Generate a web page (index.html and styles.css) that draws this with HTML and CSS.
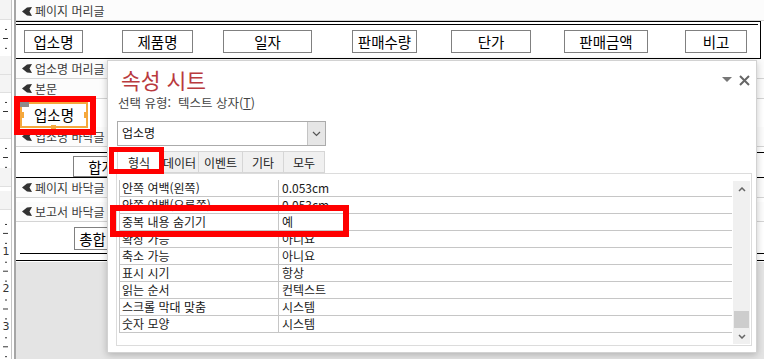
FILE: index.html
```html
<!DOCTYPE html>
<html lang="ko">
<head>
    <meta charset="UTF-8">
    <meta name="viewport" content="width=device-width, initial-scale=1.0">
    <title>보고서 디자인 - 속성 시트</title>
    <link rel="stylesheet" href="styles.css">
</head>
<body>
<div class="screen">
    <!-- vertical ruler -->
    <div class="ruler">
        <div class="r-bar r-top"></div>
        <div class="r-sec r-ph"></div>
        <div class="r-bar"></div>
        <div class="r-bar"></div>
        <div class="r-sec r-detail"></div>
        <div class="r-bar"></div>
        <div class="r-sec r-gf"></div>
        <div class="r-bar"></div>
        <div class="r-sec r-pf"></div>
        <div class="r-bar"></div>
        <div class="r-sec r-rf">
            <span class="r-num">1</span>
            <span class="r-num">2</span>
            <span class="r-num">3</span>
        </div>
    </div>
    <div class="ruler-gap"></div>

    <!-- report sections -->
    <div class="design">
        <div class="bar bar-top">
            <svg class="bar-icon" width="10" height="9" viewBox="0 0 10 9"><path d="M0 4.5 L5 0.5 L10 0 L7.5 4.5 L10 9 L5 8.5 Z" fill="#333"/></svg>
            페이지 머리글
        </div>
        <div class="sec sec-ph">
            <div class="ph-frame">
                <div class="ph-line"></div>
                <div class="labels">
                    <div class="ctl lb-1">업소명</div>
                    <div class="ctl lb-2">제품명</div>
                    <div class="ctl lb-3">일자</div>
                    <div class="ctl lb-4">판매수량</div>
                    <div class="ctl lb-5">단가</div>
                    <div class="ctl lb-6">판매금액</div>
                    <div class="ctl lb-7">비고</div>
                </div>
            </div>
        </div>
        <div class="bar">
            <svg class="bar-icon" width="10" height="9" viewBox="0 0 10 9"><path d="M0 4.5 L5 0.5 L10 0 L7.5 4.5 L10 9 L5 8.5 Z" fill="#333"/></svg>
            업소명 머리글
        </div>
        <div class="bar">
            <svg class="bar-icon" width="10" height="9" viewBox="0 0 10 9"><path d="M0 4.5 L5 0.5 L10 0 L7.5 4.5 L10 9 L5 8.5 Z" fill="#333"/></svg>
            본문
        </div>
        <div class="sec sec-detail">
            <div class="ctl-sel">
                업소명
                <span class="h h-move"></span>
                <span class="h h-left"></span>
                <span class="h h-right"></span>
                <span class="h h-bottom"></span>
            </div>
        </div>
        <div class="bar">
            <svg class="bar-icon" width="10" height="9" viewBox="0 0 10 9"><path d="M0 4.5 L5 0.5 L10 0 L7.5 4.5 L10 9 L5 8.5 Z" fill="#333"/></svg>
            업소명 바닥글
        </div>
        <div class="sec sec-gf">
            <div class="hline hline-in"></div>
            <div class="ctl ctl-sum">합계</div>
            <div class="hline"></div>
        </div>
        <div class="bar">
            <svg class="bar-icon" width="10" height="9" viewBox="0 0 10 9"><path d="M0 4.5 L5 0.5 L10 0 L7.5 4.5 L10 9 L5 8.5 Z" fill="#333"/></svg>
            페이지 바닥글
        </div>
        <div class="sec sec-pf"></div>
        <div class="bar">
            <svg class="bar-icon" width="10" height="9" viewBox="0 0 10 9"><path d="M0 4.5 L5 0.5 L10 0 L7.5 4.5 L10 9 L5 8.5 Z" fill="#333"/></svg>
            보고서 바닥글
        </div>
        <div class="sec sec-rf">
            <div class="ctl ctl-total">총합</div>
            <div class="hline hline-in hline-a"></div>
            <div class="hline hline-b"></div>
        </div>
        <div class="canvas-gray"></div>
    </div>
</div>

<!-- property sheet pane -->
<div class="sheet">
    <div class="sheet-head">
        <div class="sheet-title">속성 시트</div>
        <div class="sheet-tools">
            <svg width="10" height="6" viewBox="0 0 10 6"><path d="M0 0 H10 L5 5 Z" fill="#777"/></svg>
            <svg width="11" height="11" viewBox="0 0 11 11"><path d="M1 1 L10 10 M10 1 L1 10" stroke="#666" stroke-width="2"/></svg>
        </div>
    </div>
    <div class="sheet-type">선택 유형:&nbsp; 텍스트 상자(<u>T</u>)</div>
    <div class="combo">
        <span class="combo-text">업소명</span>
        <span class="combo-btn">
            <svg width="9" height="6" viewBox="0 0 9 6"><path d="M1 1 L4.5 4.5 L8 1" fill="none" stroke="#555" stroke-width="1.2"/></svg>
        </span>
    </div>
    <div class="tabs">
        <div class="tab tab-on t-1">형식</div>
        <div class="tab t-2">데이터</div>
        <div class="tab t-3">이벤트</div>
        <div class="tab t-4">기타</div>
        <div class="tab t-5">모두</div>
    </div>
    <div class="grid-box">
        <div class="rows">
            <div class="row"><div class="k">안쪽 여백(왼쪽)</div><div class="v">0.053cm</div></div>
            <div class="row"><div class="k">안쪽 여백(오른쪽)</div><div class="v">0.053cm</div></div>
            <div class="row"><div class="k">중복 내용 숨기기</div><div class="v">예</div></div>
            <div class="row"><div class="k">확장 가능</div><div class="v">아니요</div></div>
            <div class="row"><div class="k">축소 가능</div><div class="v">아니요</div></div>
            <div class="row"><div class="k">표시 시기</div><div class="v">항상</div></div>
            <div class="row"><div class="k">읽는 순서</div><div class="v">컨텍스트</div></div>
            <div class="row"><div class="k">스크롤 막대 맞춤</div><div class="v">시스템</div></div>
            <div class="row"><div class="k">숫자 모양</div><div class="v">시스템</div></div>
        </div>
        <div class="scroll">
            <div class="sb-btn sb-up">
                <svg width="8" height="5" viewBox="0 0 8 5"><path d="M1 4 L4 1 L7 4" fill="none" stroke="#666" stroke-width="1.5"/></svg>
            </div>
            <div class="sb-track"><div class="sb-thumb"></div></div>
            <div class="sb-btn sb-down">
                <svg width="8" height="5" viewBox="0 0 8 5"><path d="M1 1 L4 4 L7 1" fill="none" stroke="#666" stroke-width="1.5"/></svg>
            </div>
        </div>
    </div>
</div>

<!-- red highlight marks drawn over the screenshot -->
<div class="mark mark-field"></div>
<div class="mark mark-tab"></div>
<div class="mark mark-row"></div>
</body>
</html>
```

FILE: styles.css
```css
* {
    box-sizing: border-box;
}

body {
    margin: 0;
    width: 764px;
    height: 359px;
    overflow: hidden;
    position: relative;
    background: #fff;
    font-family: "Noto Sans CJK KR", "Noto Sans", sans-serif;
    color: #111;
}

.screen {
    display: flex;
    height: 359px;
}

/* ruler on the left */
.ruler {
    width: 12px;
    display: flex;
    flex-direction: column;
    border-right: 1px solid #c4c4c4;
    background: #fff;
}

.r-bar {
    height: 20px;
    background: #f4f4f4;
    border-bottom: 1px solid #e0e0e0;
}

.r-top {
    height: 21px;
}

.r-sec {
    background-image:
        linear-gradient(to bottom, transparent 9px, #333 9px, #333 10px, transparent 10px),
        linear-gradient(to bottom, transparent 18px, #333 18px, #333 19px, transparent 19px);
    background-size: 2px 18.9px, 5px 37.8px;
    background-repeat: repeat-y;
    background-position: 5px 0, 3px 0;
}

.r-ph { height: 38px; }
.r-detail { height: 28px; }
.r-gf { height: 31px; }
.r-pf { height: 4px; background-image: none; }

.r-rf {
    flex: 1;
    display: flex;
    flex-direction: column;
    align-items: center;
    padding-top: 36px;
    background-position: 5px 5px, 3px 5px;
}

.r-num {
    display: block;
    height: 12px;
    line-height: 12px;
    margin-bottom: 25.8px;
    font-family: "DejaVu Sans", sans-serif;
    font-size: 11px;
    color: #333;
    background: #fff;
    padding-left: 1px;
}

.ruler-gap {
    width: 2px;
    background: #fff;
}

/* design surface */
.design {
    flex: 1;
    display: flex;
    flex-direction: column;
    border-left: 2px solid #a6a6a6;
}

.bar {
    height: 20px;
    display: flex;
    align-items: center;
    gap: 3px;
    padding-left: 6px;
    background: #fcfcfc;
    border-bottom: 1px solid #d4d4d4;
    font-size: 12px;
    line-height: 14px;
    color: #3a3a3a;
}

.bar-top {
    height: 21px;
    padding-top: 2px;
}

.bar-icon {
    flex: none;
}

.sec {
    background: #fff;
}

.sec-ph {
    height: 38px;
    padding-right: 3px;
}

.ph-frame {
    height: 38px;
    border-top: 1px solid #000;
    border-right: 1px solid #000;
    border-bottom: 1px solid #000;
}

.ph-line {
    height: 1px;
    margin-top: 2px;
    margin-right: 2px;
    background: #000;
}

.labels {
    display: flex;
    margin-top: 5px;
}

.ctl {
    height: 23px;
    border: 1px solid #808080;
    display: flex;
    align-items: center;
    justify-content: center;
    font-size: 14.5px;
    line-height: 18px;
    color: #000;
    background: #fff;
}

.lb-1 { margin-left: 8px; width: 59px; }
.lb-2 { margin-left: 39px; width: 71px; }
.lb-3 { margin-left: 30px; width: 89px; }
.lb-4 { margin-left: 40px; width: 65px; }
.lb-5 { margin-left: 34px; width: 80px; }
.lb-6 { margin-left: 33px; width: 84px; }
.lb-7 { margin-left: 37px; width: 62px; }

.sec-detail {
    height: 28px;
    padding-top: 3px;
    padding-left: 4px;
}

.ctl-sel {
    position: relative;
    width: 68px;
    height: 26px;
    border: 2px solid #f5a83c;
    display: flex;
    align-items: center;
    justify-content: center;
    font-size: 14.5px;
    line-height: 18px;
    color: #000;
    background: #fff;
}

/* selection handles */
.h {
    position: absolute;
    background: #f5a83c;
}

.h-move {
    left: -2px;
    top: -2px;
    width: 9px;
    height: 5px;
    background: #8c8c8c;
}

.h-left {
    left: -2px;
    top: 8px;
    width: 4px;
    height: 6px;
}

.h-right {
    right: -2px;
    top: 8px;
    width: 4px;
    height: 6px;
}

.h-bottom {
    left: 29px;
    bottom: -3px;
    width: 5px;
    height: 4px;
}

.sec-gf {
    height: 31px;
    padding-top: 5px;
}

.hline {
    height: 1px;
    background: #000;
}

.hline-in {
    margin-left: 4px;
}

.ctl-sum {
    margin: 3px 0 0 57px;
    width: 57px;
    height: 21px;
}

.sec-pf {
    height: 4px;
}

.sec-rf {
    height: 40px;
    padding-top: 5px;
}

.ctl-total {
    margin-left: 58px;
    width: 37px;
}

.hline-a {
    margin-top: 3px;
}

.hline-b {
    margin-top: 6px;
}

.canvas-gray {
    flex: 1;
    background: #e4e4e4;
}

/* property sheet */
.sheet {
    position: absolute;
    left: 107px;
    top: 60px;
    width: 650px;
    height: 293px;
    padding: 0 4px 0 8px;
    background: #fff;
    border: 1px solid #d2d2d2;
    box-shadow: 0 2px 7px rgba(0, 0, 0, 0.22);
    z-index: 2;
}

.sheet-head {
    display: flex;
    justify-content: space-between;
    align-items: center;
    margin-top: 6px;
    height: 26px;
}

.sheet-title {
    margin-left: 5px;
    font-size: 21.5px;
    line-height: 26px;
    color: #b93a3e;
}

.sheet-tools {
    display: flex;
    align-items: center;
    gap: 7px;
    margin-right: 2px;
}

.sheet-type {
    margin-top: 2px;
    margin-left: 2px;
    font-size: 12.5px;
    line-height: 16px;
    color: #444;
}

.combo {
    display: flex;
    justify-content: space-between;
    margin: 10px 0 0 1px;
    width: 209px;
    height: 25px;
    border: 1px solid #ababab;
}

.combo-text {
    padding-left: 4px;
    font-size: 12px;
    line-height: 22px;
}

.combo-btn {
    width: 18px;
    display: flex;
    align-items: center;
    justify-content: center;
    background: #e6e6e6;
    border-left: 1px solid #c4c4c4;
}

.tabs {
    display: flex;
    margin: 5px 0 0 1px;
    height: 22px;
}

.tab {
    display: flex;
    align-items: center;
    justify-content: center;
    height: 22px;
    background: #f0f0f0;
    border: 1px solid #d6d6d6;
    border-left: none;
    font-size: 12px;
    color: #222;
}

.tab-on {
    background: #fff;
    border-left: 1px solid #d6d6d6;
    border-bottom: none;
}

.t-1 { width: 44px; }
.t-2 { width: 38px; }
.t-3 { width: 44px; }
.t-4 { width: 41px; }
.t-5 { width: 41px; }

.grid-box {
    display: flex;
    gap: 1px;
    height: 173px;
    padding: 6px 1px 0 2px;
    border: 1px solid #dcdcdc;
}

.rows {
    flex: 1;
}

.row {
    display: grid;
    grid-template-columns: 159px 1fr;
    height: 17px;
    border-left: 1px solid #c6c6c6;
    border-bottom: 1px solid #c6c6c6;
    font-size: 12px;
    line-height: 16px;
    color: #1a1a1a;
}

.k {
    padding-left: 2px;
    border-right: 1px solid #c6c6c6;
    white-space: nowrap;
}

.v {
    padding-left: 3px;
}

.scroll {
    width: 17px;
    height: 163px;
    margin-top: 1px;
    display: flex;
    flex-direction: column;
    background: #f0f0f0;
}

.sb-btn {
    display: flex;
    align-items: center;
    justify-content: center;
}

.sb-up { height: 17px; }
.sb-down { height: 16px; }

.sb-track {
    flex: 1;
    display: flex;
    align-items: flex-end;
    justify-content: center;
}

.sb-thumb {
    width: 15px;
    height: 17px;
    background: #cdcdcd;
}

/* red annotation boxes */
.mark {
    position: absolute;
    border: 6px solid #ff0000;
    z-index: 3;
}

.mark-field {
    left: 14px;
    top: 96px;
    width: 82px;
    height: 39px;
}

.mark-tab {
    left: 109px;
    top: 147px;
    width: 55px;
    height: 27px;
    border-width: 5px;
}

.mark-row {
    left: 110px;
    top: 205px;
    width: 239px;
    height: 32px;
}
```
